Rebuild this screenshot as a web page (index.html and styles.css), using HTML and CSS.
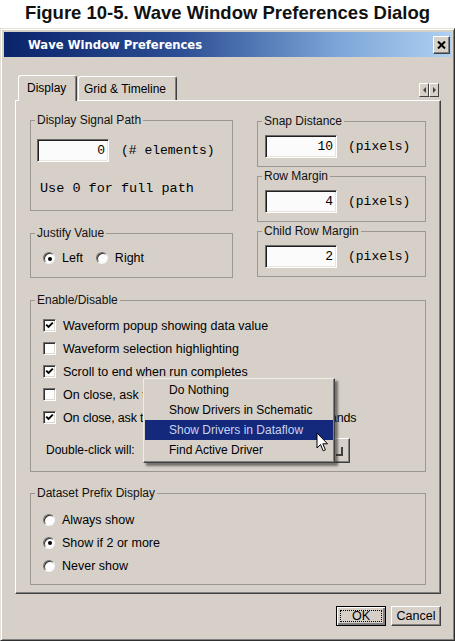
FILE: index.html
```html
<!DOCTYPE html>
<html lang="en">
<head>
<meta charset="utf-8">
<title>Wave Window Preferences</title>
<link rel="stylesheet" href="styles.css">
</head>
<body>
<div class="page">
  <h1 class="caption">Figure 10-5. Wave Window Preferences Dialog</h1>
  <div class="dialog">
    <div class="titlebar">
      <span class="title">Wave Window Preferences</span>
      <span class="close-btn">
        <svg width="9" height="8" viewBox="0 0 9 8"><path d="M1 0.5 L8 7.5 M8 0.5 L1 7.5" stroke="#000" stroke-width="2"/></svg>
      </span>
    </div>

    <div class="tabs">
      <div class="tab active">Display</div>
      <div class="tab inactive">Grid &amp; Timeline</div>
      <div class="tab-scroll">
        <span class="sbtn"><span class="tri-left"></span></span>
        <span class="sbtn"><span class="tri-right"></span></span>
      </div>
    </div>

    <div class="panel">
      <div class="top">
        <div class="col col-left">
          <fieldset class="group dsp">
            <legend>Display Signal Path</legend>
            <div class="gbody dsp-body">
              <div class="field-row">
                <span class="input mono">0</span>
                <span class="mono">(# elements)</span>
              </div>
              <div class="hint mono">Use 0 for full path</div>
            </div>
          </fieldset>
          <fieldset class="group justify">
            <legend>Justify Value</legend>
            <div class="gbody justify-body">
              <label class="opt"><span class="radio checked"></span>Left</label>
              <label class="opt"><span class="radio"></span>Right</label>
            </div>
          </fieldset>
        </div>
        <div class="col col-right">
          <fieldset class="group small">
            <legend>Snap Distance</legend>
            <div class="gbody small-body">
              <div class="field-row wide">
                <span class="input mono">10</span>
                <span class="mono">(pixels)</span>
              </div>
            </div>
          </fieldset>
          <fieldset class="group small">
            <legend>Row Margin</legend>
            <div class="gbody small-body">
              <div class="field-row wide">
                <span class="input mono">4</span>
                <span class="mono">(pixels)</span>
              </div>
            </div>
          </fieldset>
          <fieldset class="group small">
            <legend>Child Row Margin</legend>
            <div class="gbody small-body">
              <div class="field-row wide">
                <span class="input mono">2</span>
                <span class="mono">(pixels)</span>
              </div>
            </div>
          </fieldset>
        </div>
      </div>

      <fieldset class="group enable">
        <legend>Enable/Disable</legend>
        <div class="gbody enable-body">
          <label class="check-row"><span class="cb"><svg viewBox="0 0 9 9" width="9" height="9"><path d="M1.2 3.6 L3.5 5.9 L7.8 1.6" fill="none" stroke="#000" stroke-width="1.9"/></svg></span>Waveform popup showing data value</label>
          <label class="check-row"><span class="cb"></span>Waveform selection highlighting</label>
          <label class="check-row"><span class="cb"><svg viewBox="0 0 9 9" width="9" height="9"><path d="M1.2 3.6 L3.5 5.9 L7.8 1.6" fill="none" stroke="#000" stroke-width="1.9"/></svg></span>Scroll to end when run completes</label>
          <label class="check-row"><span class="cb"></span>On close, ask to save wave format</label>
          <label class="check-row tight"><span class="cb"><svg viewBox="0 0 9 9" width="9" height="9"><path d="M1.2 3.6 L3.5 5.9 L7.8 1.6" fill="none" stroke="#000" stroke-width="1.9"/></svg></span>On close, ask to save wave window format commands</label>
          <div class="dbl-row">
            <span>Double-click will:</span>
            <span class="combo"><span class="combo-btn"><span class="glyph"></span></span></span>
          </div>

          <div class="popup">
            <div class="item">Do Nothing</div>
            <div class="item">Show Drivers in Schematic</div>
            <div class="item sel">Show Drivers in Dataflow</div>
            <div class="item">Find Active Driver</div>
          </div>
          <svg class="cursor" width="13" height="21" viewBox="0 0 13 21"><path d="M1 1 L1 16 L4.5 12.5 L7.2 18.8 L9.4 17.8 L6.8 11.8 L11.5 11.8 Z" fill="#fff" stroke="#000" stroke-width="1" stroke-linejoin="round"/></svg>
        </div>
      </fieldset>

      <fieldset class="group dataset">
        <legend>Dataset Prefix Display</legend>
        <div class="gbody dataset-body">
          <label class="radio-row"><span class="radio"></span>Always show</label>
          <label class="radio-row"><span class="radio checked"></span>Show if 2 or more</label>
          <label class="radio-row"><span class="radio"></span>Never show</label>
        </div>
      </fieldset>
    </div>

    <div class="buttons">
      <span class="btn default"><span class="focus">OK</span></span>
      <span class="btn">Cancel</span>
    </div>
  </div>
</div>
</body>
</html>
```

FILE: styles.css
```css
* { box-sizing: border-box; }
html, body { margin: 0; padding: 0; }
body {
  width: 455px;
  height: 641px;
  overflow: hidden;
  background: #ffffff;
  font-family: "Liberation Sans", Arial, sans-serif;
  font-size: 12px;
  color: #000;
}
.page { display: flex; flex-direction: column; height: 641px; }

.caption {
  margin: 0;
  height: 28px;
  padding-top: 2px;
  font-size: 18.5px;
  line-height: 22px;
  font-weight: bold;
  text-align: center;
  color: #111;
  white-space: nowrap;
}

.dialog {
  flex: 1;
  display: flex;
  flex-direction: column;
  background: #d6d0c9;
  border: 1px solid;
  border-color: #e4e0da #303030 #303030 #e4e0da;
  box-shadow: inset 1px 1px 0 #ffffff, inset -1px -1px 0 #808080;
  padding: 3px;
}

.titlebar {
  height: 25px;
  display: flex;
  align-items: center;
  justify-content: space-between;
  padding-left: 24px;
  padding-right: 1px;
  background: linear-gradient(90deg, #0a246a 0%, #2d4f95 40%, #7ea6d8 75%, #aed0f2 100%);
}
.title {
  color: #fff;
  font-family: "DejaVu Sans", Verdana, sans-serif;
  font-weight: bold;
  font-size: 11.6px;
}
.close-btn {
  width: 17px;
  height: 18px;
  display: flex;
  align-items: center;
  justify-content: center;
  background: #d6d0c9;
  border: 1px solid;
  border-color: #fff #404040 #404040 #fff;
  box-shadow: inset -1px -1px 0 #808080;
  margin-top: 1px;
}

.tabs {
  display: flex;
  align-items: flex-end;
  margin-top: 18px;
  margin-left: 11px;
  width: 426px;
  height: 25px;
  padding-left: 3px;
}
.tab {
  height: 24px;
  display: flex;
  align-items: center;
  border: 1px solid;
  border-bottom: none;
  border-color: #fff #404040 transparent #fff;
  border-radius: 3px 3px 0 0;
  box-shadow: inset -1px 0 0 #808080;
  background: #d6d0c9;
  white-space: nowrap;
}
.tab.active {
  width: 59px;
  height: 26px;
  margin-bottom: -1px;
  padding: 0 0 1px 8px;
  position: relative;
  z-index: 2;
}
.tab.inactive {
  width: 99px;
  margin-left: 1px;
  padding-left: 5px;
}
.tab-scroll {
  margin-left: auto;
  margin-right: 2px;
  margin-bottom: 3px;
  display: flex;
}
.sbtn {
  width: 10px;
  height: 14px;
  display: flex;
  align-items: center;
  justify-content: center;
  border: 1px solid;
  border-color: #fff #404040 #404040 #fff;
  background: #d6d0c9;
}
.tri-left {
  width: 0; height: 0;
  border-top: 3px solid transparent;
  border-bottom: 3px solid transparent;
  border-right: 3px solid #404040;
}
.tri-right {
  width: 0; height: 0;
  border-top: 3px solid transparent;
  border-bottom: 3px solid transparent;
  border-left: 3px solid #404040;
}

.panel {
  margin-left: 11px;
  width: 426px;
  height: 494px;
  border: 1px solid;
  border-color: #fff #404040 #404040 #fff;
  box-shadow: inset -1px -1px 0 #808080;
  padding: 12px 14px 7px;
  display: flex;
  flex-direction: column;
  position: relative;
  z-index: 1;
}

.top {
  display: grid;
  grid-template-columns: 203px 169px;
  column-gap: 24px;
  align-items: start;
}
.col { display: flex; flex-direction: column; }
.col-left { gap: 15px; }
.col-right { gap: 2px; margin-top: 1px; }

fieldset.group {
  margin: 0;
  padding: 0;
  min-width: 0;
  border: 1px solid #9c9792;
}
fieldset.group legend {
  margin-left: 4px;
  padding: 0 2px;
  font-size: 12px;
  line-height: 14px;
  color: #111;
}
.gbody { position: relative; }

fieldset.dsp { height: 98px; }
.dsp-body { padding: 12px 0 0 6px; }
.field-row { display: flex; align-items: center; gap: 12px; }
.field-row.wide { gap: 11px; }
.input {
  width: 72px;
  height: 23px;
  background: #fbfbfb;
  border: 1px solid;
  border-color: #6a6a6a #ffffff #ffffff #6a6a6a;
  box-shadow: inset 1px 1px 0 #202020, inset -1px -1px 0 #e8e4de;
  text-align: right;
  padding-right: 3px;
  line-height: 21px;
}
.mono {
  font-family: "Liberation Mono", "Courier New", monospace;
  font-size: 13px;
}
.hint { margin: 19px 0 0 3px; line-height: 16px; font-size: 13.5px; }

fieldset.justify { height: 52px; }
.justify-body {
  padding: 10px 0 0 12px;
  display: flex;
  gap: 13px;
}
.opt, .radio-row, .check-row {
  display: flex;
  align-items: center;
  gap: 7px;
  font-size: 12.5px;
  line-height: 16px;
}

.radio {
  width: 12px;
  height: 12px;
  border-radius: 50%;
  background: #fcfcfc;
  border: 1px solid;
  border-color: #707070 #f4f4f4 #f4f4f4 #707070;
  box-shadow: inset 1px 1px 0 #303030;
  display: flex;
  align-items: center;
  justify-content: center;
  flex: none;
}
.radio.checked::after {
  content: "";
  width: 4px;
  height: 4px;
  border-radius: 50%;
  background: #000;
  margin: 1px 0 0 1px;
}

fieldset.small { height: 53px; }
.small-body { padding: 7px 0 0 7px; }

fieldset.enable { height: 179px; margin-top: 15px; }
.enable-body { padding: 7px 0 0 12px; }
.check-row { height: 23px; white-space: nowrap; }
.check-row.tight { letter-spacing: -0.15px; }
.cb {
  width: 13px;
  height: 13px;
  flex: none;
  background: #fcfcfc;
  border: 1px solid;
  border-color: #707070 #ffffff #ffffff #707070;
  box-shadow: inset 1px 1px 0 #303030, inset -1px -1px 0 #dcd8d2;
  display: flex;
  align-items: center;
  justify-content: center;
}
.dbl-row {
  margin-top: 9px;
  height: 24px;
  padding-left: 3px;
  display: flex;
  align-items: center;
  font-size: 12px;
}
.combo {
  margin-left: 16px;
  width: 199px;
  height: 25px;
  background: #d6d0c9;
  border: 1px solid;
  border-color: #fff #404040 #404040 #fff;
  box-shadow: inset -1px -1px 0 #808080;
  display: flex;
  justify-content: flex-end;
  align-items: center;
  padding-right: 3px;
}
.combo-btn {
  width: 14px;
  height: 15px;
  display: flex;
  align-items: flex-end;
  justify-content: flex-end;
}
.glyph {
  width: 7px;
  height: 9px;
  border-right: 2px solid #404040;
  border-bottom: 2px solid #404040;
  margin: 0 3px 2px 0;
}

.popup {
  position: absolute;
  left: 112px;
  top: 71px;
  width: 192px;
  height: 85px;
  background: #d6d0c9;
  border: 1px solid;
  border-color: #f0ece6 #404040 #404040 #f0ece6;
  box-shadow: inset -1px -1px 0 #808080, 3px 3px 2px rgba(40, 40, 40, 0.55);
  padding: 1px;
  z-index: 5;
}
.item {
  height: 20px;
  line-height: 20px;
  padding-left: 24px;
  font-size: 12px;
  white-space: nowrap;
}
.item.sel {
  background: #14297c;
  color: #c9d3ee;
}
.cursor {
  position: absolute;
  left: 285px;
  top: 125px;
  z-index: 6;
}

fieldset.dataset { height: 99px; margin-top: 14px; }
.dataset-body { padding: 8px 0 0 12px; }
.radio-row { height: 23px; }

.buttons {
  display: flex;
  justify-content: flex-end;
  gap: 5px;
  margin-top: 12px;
  margin-left: 11px;
  width: 426px;
}
.btn {
  width: 50px;
  height: 20px;
  display: flex;
  align-items: center;
  justify-content: center;
  background: #d6d0c9;
  border: 1px solid;
  border-color: #fff #404040 #404040 #fff;
  box-shadow: inset -1px -1px 0 #808080;
  font-size: 12.5px;
}
.btn.default {
  border: 1px solid #000;
  box-shadow: inset 1px 1px 0 #fff, inset -2px -2px 0 #808080;
  padding: 3px;
}
.focus {
  width: 100%;
  height: 100%;
  display: flex;
  align-items: center;
  justify-content: center;
  border: 1px dotted #000;
}
```
